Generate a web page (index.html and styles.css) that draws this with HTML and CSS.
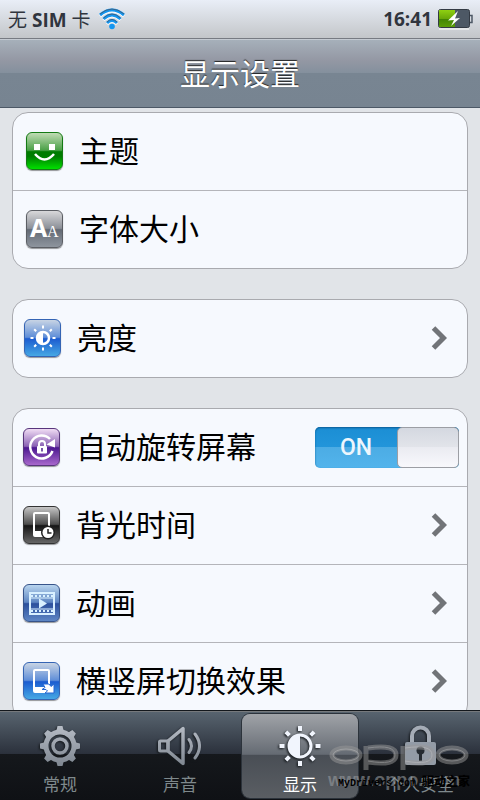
FILE: index.html
```html
<!DOCTYPE html>
<html lang="zh-CN">
<head>
  <meta charset="UTF-8">
  <meta name="viewport" content="width=device-width, initial-scale=1">
  <title>显示设置</title>
  <link rel="stylesheet" href="styles.css">
</head>
<body>

  <!-- 状态栏 -->
  <div class="status-bar">
    <span class="carrier">无 <b>SIM</b> 卡</span>
    <svg class="wifi" width="28" height="24" viewBox="0 0 28 24" fill="none">
      <g stroke="#fff" stroke-width="3" transform="translate(0 1)">
        <path d="M2 8Q14-2 26 8M5.500 12Q14 4 22.500 12M9 16Q14 11 19 16"/>
      </g>
      <g stroke="#1496f0" stroke-width="3">
        <path d="M2 8Q14-2 26 8M5.500 12Q14 4 22.500 12M9 16Q14 11 19 16"/>
      </g>
      <path d="M2 7Q14-3 26 7M5.500 11Q14 3 22.500 11M9 15Q14 10 19 15" stroke="#3a6488"/>
      <circle cx="14" cy="19.500" r="2.800" fill="#1496f0"/>
    </svg>
    <span class="clock">16:41</span>
    <svg class="battery" width="36" height="22" viewBox="0 0 36 22">
      <defs>
        <linearGradient id="charge" x2="0" y2="1">
          <stop offset="0" stop-color="#8fd012"/>
          <stop offset=".5" stop-color="#6aa808"/>
          <stop offset=".5" stop-color="#3f8203"/>
          <stop offset="1" stop-color="#5a9c08"/>
        </linearGradient>
      </defs>
      <path d="M2 21H32" stroke="#fff"/>
      <rect x="1.500" y="1.500" width="31" height="18" rx="2" fill="#4d5865" stroke="#333a44"/>
      <path d="M33 7.500h2v7h-2" fill="none" stroke="#4d5865" stroke-width="1.500"/>
      <path d="M2 2h16v17H2z" fill="url(#charge)"/>
      <path d="M21 3 11 12.500l6-.5-3 6 9-8-5 .4z" fill="#fff"/>
    </svg>
  </div>

  <header class="title-bar">
    <h1>显示设置</h1>
  </header>

  <!-- 设置列表 -->
  <main class="settings">
    <section class="group group-theme">
      <a class="row" href="#theme">
        <span class="icon icon-green">
          <svg viewBox="0 0 37 37" fill="#fff">
            <path d="M8 12h6v6H8zM23 12h6v6h-6z"/>
            <path d="M9 22Q18.500 33 28 22" fill="none" stroke="#fff" stroke-width="2.500"/>
          </svg>
        </span>
        <span class="name">主题</span>
      </a>
      <a class="row" href="#font-size">
        <span class="icon icon-gray">
          <svg viewBox="0 0 37 37" fill="#fff">
            <text class="glyph-sans" x="4" y="27">A</text>
            <text class="glyph-serif" x="21" y="27">A</text>
          </svg>
        </span>
        <span class="name">字体大小</span>
      </a>
    </section>

    <section class="group group-light">
      <a class="row" href="#brightness">
        <span class="icon icon-blue">
          <svg viewBox="0 0 37 37" fill="none" stroke="#fff">
            <circle cx="19" cy="19" r="6" stroke-width="2.500"/>
            <path d="M19 13a6 6 0 0 0 0 12z" fill="#fff" stroke="none"/>
            <path stroke-width="2" d="M19 6.500v3M19 28.500v3M6.500 19h3M28.500 19h3M10.200 10.200l2 2M25.800 25.800l2 2M10.200 27.800l2-2M25.800 12.200l2-2"/>
          </svg>
        </span>
        <span class="name">亮度</span>
        <svg class="arrow" viewBox="0 0 16 24"><path d="M2.500 2 12.500 12l-10 10"/></svg>
      </a>
    </section>

    <section class="group group-screen">
      <div class="row">
        <span class="icon icon-purple">
          <svg viewBox="0 0 37 37" fill="none" stroke="#fff">
            <path d="M29.500 23A11.500 11.500 0 1 1 27 11" stroke-width="2.500"/>
            <path d="M32 11v8.500l-8.500-3z" fill="#fff" stroke="none"/>
            <path d="M16 19v-3a3 3 0 0 1 6 0v3" stroke-width="2"/>
            <rect x="14" y="18" width="10" height="7.500" rx="1" fill="#fff" stroke="none"/>
            <path d="M19 20v3.500" stroke="#4a1c8c" stroke-width="1.500"/>
          </svg>
        </span>
        <label class="name" for="autoRotate">自动旋转屏幕</label>
        <span class="switch">
          <input type="checkbox" id="autoRotate" checked>
          <span class="switch-on">ON</span>
          <span class="switch-knob"></span>
        </span>
      </div>
      <a class="row" href="#backlight">
        <span class="icon icon-black">
          <svg viewBox="0 0 37 37" fill="none" stroke="#fff">
            <path fill="#fff" stroke="none" fill-rule="evenodd" d="M12 6h13a2 2 0 0 1 2 2v23H12a2 2 0 0 1-2-2V8a2 2 0 0 1 2-2zm0 2v17h13V8z"/>
            <circle cx="25" cy="26.500" r="7" fill="#222" stroke="none"/>
            <circle cx="25" cy="26.500" r="5.500" fill="#fff" stroke="none"/>
            <path d="M25 23v4h3.500" stroke="#222" stroke-width="1.500"/>
          </svg>
        </span>
        <span class="name">背光时间</span>
        <svg class="arrow" viewBox="0 0 16 24"><path d="M2.500 2 12.500 12l-10 10"/></svg>
      </a>
      <a class="row" href="#animation">
        <span class="icon icon-steel">
          <svg viewBox="0 0 37 37" fill="none" stroke="#d9f0ff">
            <path d="M7 9h24v21H7z" stroke-width="2"/>
            <path d="M8 12h22M8 27h22" stroke-width="2" stroke-dasharray="2 2"/>
            <path d="M8 14h22M8 25h22"/>
            <path d="M16 14.500v10l8-5z" fill="#d9f0ff" stroke="none"/>
          </svg>
        </span>
        <span class="name">动画</span>
        <svg class="arrow" viewBox="0 0 16 24"><path d="M2.500 2 12.500 12l-10 10"/></svg>
      </a>
      <a class="row" href="#rotation-effect">
        <span class="icon icon-blue">
          <svg viewBox="0 0 37 37" fill="#fff">
            <path fill-rule="evenodd" d="M12 7h13a2 2 0 0 1 2 2v22H12a2 2 0 0 1-2-2V9a2 2 0 0 1 2-2zm0 2v16h13V9z"/>
            <path stroke="#2467d4" d="M20 22h6l2 2.500 3-2.500v9h-9l2.500-2-1.500-1.500h-4l3-2z"/>
          </svg>
        </span>
        <span class="name">横竖屏切换效果</span>
        <svg class="arrow" viewBox="0 0 16 24"><path d="M2.500 2 12.500 12l-10 10"/></svg>
      </a>
    </section>
  </main>

  <!-- 底部标签栏 -->
  <nav class="tab-bar">
    <a class="tab" href="#general">
      <svg viewBox="0 0 48 44" fill="none" stroke="url(#metal)">
        <defs>
          <linearGradient id="metal" gradientUnits="userSpaceOnUse" x1="0" y1="2" x2="0" y2="42">
            <stop offset="0" stop-color="#b6bcc5"/>
            <stop offset="1" stop-color="#7e8690"/>
          </linearGradient>
        </defs>
        <circle cx="24" cy="22" r="14" stroke-width="5"/>
        <circle cx="24" cy="22" r="7" stroke-width="3.500"/>
        <g fill="url(#metal)" stroke="none">
          <path d="M20 8l1.500-6h5L28 8zM20 36l1.500 6h5l1.500-6z"/>
          <path d="M10 18l-6 1.500v5l6 1.500zM38 18l6 1.500v5L38 26z"/>
          <path d="M11.300 15 8.100 9.600l3.500-3.500 5.400 3.200zM36.700 15l3.200-5.400-3.500-3.500L31 9.300zM11.300 29l-3.200 5.400 3.500 3.500 5.400-3.200zM36.700 29l3.200 5.400-3.500 3.500-5.400-3.200z"/>
        </g>
      </svg>
      <span>常规</span>
    </a>
    <a class="tab" href="#sound">
      <svg viewBox="0 0 48 44" fill="none" stroke="url(#metal)" stroke-linejoin="round" stroke-linecap="round">
        <path d="M12 17 27 4.500v35L12 27z" stroke-width="3.500"/>
        <rect x="3.500" y="17" width="8.500" height="10" rx="1" stroke-width="3"/>
        <path d="M33 15.500Q38 22 33 28.500M39 10Q48 22 39 34" stroke-width="3"/>
      </svg>
      <span>声音</span>
    </a>
    <a class="tab active" href="#display" aria-current="page">
      <svg viewBox="0 0 48 44" fill="none" stroke="#f1f5fd">
        <circle cx="24" cy="22" r="11" stroke-width="3"/>
        <path d="M24 11a11 11 0 0 0 0 22z" fill="#f1f5fd" stroke="none"/>
        <path stroke-width="4" d="M24 2v5M24 37v5M3.500 22h5M39.500 22h5M9.900 7.900l3.500 3.500M34.600 32.600l3.500 3.500M9.900 36.100l3.500-3.500M34.600 11.400l3.500-3.500"/>
      </svg>
      <span>显示</span>
    </a>
    <a class="tab" href="#security">
      <svg viewBox="0 0 48 44">
        <path d="M16 19v-7a8.500 8.500 0 0 1 17 0v7" fill="none" stroke="#a5acb6" stroke-width="4"/>
        <rect x="9" y="18" width="31" height="23" rx="2" fill="#939ba6"/>
        <circle cx="24.500" cy="26.500" r="4" fill="#242a31"/>
        <path d="M24.500 27v10" stroke="#242a31" stroke-width="3"/>
      </svg>
      <span>个人安全</span>
    </a>

    <!-- 水印 -->
    <div class="watermark" aria-hidden="true">
      <svg class="watermark-logo" viewBox="0 0 142 30" fill="none">
        <g stroke="#999" opacity=".5">
          <ellipse cx="18" cy="13" rx="14" ry="7" stroke-width="5"/>
          <path d="M38 4v24M40 6Q68 2 68 13T40 20" stroke-width="5"/>
          <path d="M75 4v24M77 6Q105 2 105 13T77 20" stroke-width="5"/>
          <ellipse cx="124" cy="13" rx="14" ry="7" stroke-width="5"/>
        </g>
        <g stroke="#ddd" opacity=".3">
          <ellipse cx="18" cy="13" rx="13" ry="6"/>
          <path d="M40 6Q67 2 67 13T40 19M77 6Q104 2 104 13T77 19"/>
          <ellipse cx="124" cy="13" rx="13" ry="6"/>
        </g>
      </svg>
      <span class="watermark-url">www.oppo.com</span>
      <span class="watermark-source">MyDrivers.com <b>驱动之家</b></span>
    </div>
  </nav>

</body>
</html>
```
FILE: styles.css
```css
* {
  box-sizing: border-box;
}
body {
  font-family: "Open Sans", "Noto Sans CJK SC", sans-serif;
  background-color: #e1e4e8;
  color: #000;
  margin: 0;
  height: 100vh;
  display: flex;
  flex-direction: column;
  overflow: hidden;
}
a {
  color: inherit;
  text-decoration: none;
}
svg {
  display: block;
  flex: none;
}
/* 状态栏 */
.status-bar {
  flex: none;
  display: flex;
  align-items: center;
  height: 39px;
  padding: 0 7px 0 8px;
  background: linear-gradient(#e9eef7, #c3c6c9);
  border-bottom: 1px solid #777b82;
  color: #30353e;
  font-size: 19px;
}
.wifi {
  margin-left: 7px;
}
.clock {
  margin-left: auto;
  margin-right: 5px;
  font-weight: bold;
}
/* 标题栏 */
.title-bar {
  flex: none;
  height: 69px;
  border-top: 1px solid #c5cbd2;
  border-bottom: 1px solid #4c5866;
  background: linear-gradient(#a6b0ba, #9498a4 30%, #84909d 49%, #788592 49%, #778491);
}
.title-bar h1 {
  margin: 0;
  color: #fff;
  font-size: 30px;
  font-weight: normal;
  line-height: 68px;
  text-align: center;
  text-shadow: 0 -1px 1px #222;
}
/* 设置列表 */
.settings {
  flex: 1;
  min-height: 0;
  padding: 4px 12px;
  overflow-y: auto;
  scrollbar-width: none;
}
.group {
  margin-bottom: 30px;
  background-color: #f6f9fe;
  border: 1px solid #a9aaaf;
  border-radius: 16px;
}
.row {
  display: flex;
  align-items: center;
  gap: 16px;
  height: 77px;
  padding: 0 20px 1px 10px;
}
.row + .row {
  height: 78px;
  border-top: 1px solid #b4b5ba;
}
.group-theme .row {
  padding-left: 13px;
}
.group-light .row {
  padding-left: 11px;
}
.name {
  flex: 1;
  font-size: 30px;
  line-height: 40px;
}
.arrow {
  width: 16px;
  height: 24px;
  fill: none;
  stroke: #717478;
  stroke-width: 5px;
}
/* 图标 */
.icon {
  flex: none;
  width: 37px;
  height: 38px;
  border-radius: 6px;
  border: 1px solid;
  box-shadow: 0 1px 1px rgba(0,0,0,0.4);
}
.icon svg {
  width: 37px;
  height: 37px;
  margin: -1px;
}
.icon-green {
  border-color: #147a14;
  background: linear-gradient(#c0dcb4, #4aa046 48%, #007c00 52%, #007c00 65%, #00e000);
}
.icon-gray {
  border-color: #5b5e64;
  background: linear-gradient(#d8d8da, #8c9098 48%, #626974 52%, #8e959e);
}
.icon-blue {
  border-color: #3464b4;
  background: linear-gradient(#c8d4e4, #5f8ed8 48%, #1c5cd0 52%, #46a8e4);
}
.icon-purple {
  border-color: #58357c;
  background: linear-gradient(#f0dcf4, #8a62b4 48%, #4c1890 52%, #a868cc);
}
.icon-black {
  border-color: #333;
  background: linear-gradient(#c6c6c6, #4c4c4c 48%, #161616 52%, #666);
}
.icon-steel {
  border-color: #37548a;
  background: linear-gradient(#b8d4ee, #5e86c2 48%, #2c509c 52%, #5e86c4);
}
.glyph-sans {
  font: bold 25px "Open Sans", sans-serif;
}
.glyph-serif {
  font: 16px "Liberation Serif", serif;
}
/* 开关 */
.switch {
  position: relative;
  display: flex;
  width: 144px;
  height: 41px;
  margin-right: -12px;
  border-radius: 5px;
  background: linear-gradient(#1b8ed4, #2295da 49%, #4cace4 49%, #52b4ec);
  box-shadow: inset 0 1px 2px #0a5c94;
}
.switch input {
  position: absolute;
  inset: 0;
  width: 100%;
  height: 100%;
  margin: 0;
  opacity: 0;
  cursor: pointer;
}
.switch-on {
  flex: 1;
  color: #eef6fd;
  font-family: Roboto, sans-serif;
  font-size: 23px;
  font-weight: 500;
  line-height: 41px;
  text-align: center;
}
.switch-knob {
  width: 62px;
  border: 1px solid #9c9ea4;
  border-radius: 5px;
  background: linear-gradient(#d4d8e0, #e2e4ea 49%, #eaebf1 49%, #f8f8fc);
}
/* 底部标签栏 */
.tab-bar {
  flex: none;
  position: relative;
  display: flex;
  height: 90px;
  padding: 3px 0 2px;
  border-top: 1px solid #14181c;
  background: linear-gradient(#596570, #2b313c 48%, #15181c 48%, #0f1115);
  box-shadow: inset 0 1px #76797c;
}
.tab {
  flex: 1;
  display: flex;
  flex-direction: column;
  align-items: center;
  gap: 4px;
  margin: 0 2px;
  padding-top: 10px;
  border-radius: 8px;
  color: #7f898c;
  font-size: 17px;
  line-height: 26px;
}
.tab svg {
  width: 48px;
  height: 44px;
  filter: drop-shadow(-1px 1px 1px #14181c);
}
.tab.active {
  color: #fff;
  background: linear-gradient(#a0a3a8, #656b73 48%, #494e55 49%, #5a5e63);
  box-shadow: 0 0 0 1px #2c333b;
}
/* 水印 */
.watermark {
  position: absolute;
  right: 10px;
  bottom: 0;
  width: 142px;
  height: 58px;
  pointer-events: none;
  white-space: nowrap;
}
.watermark-logo {
  width: 142px;
  height: 30px;
}
.watermark-url {
  position: absolute;
  left: 0;
  top: 28px;
  color: rgba(150,154,158,0.6);
  font: bold 18px/20px "Liberation Sans", sans-serif;
}
.watermark-source {
  position: absolute;
  left: 10px;
  top: 33px;
  color: #000;
  font: bold 10px/16px "Liberation Mono", "Noto Sans CJK SC", monospace;
}
.watermark-source b {
  font-size: 12px;
}
```
